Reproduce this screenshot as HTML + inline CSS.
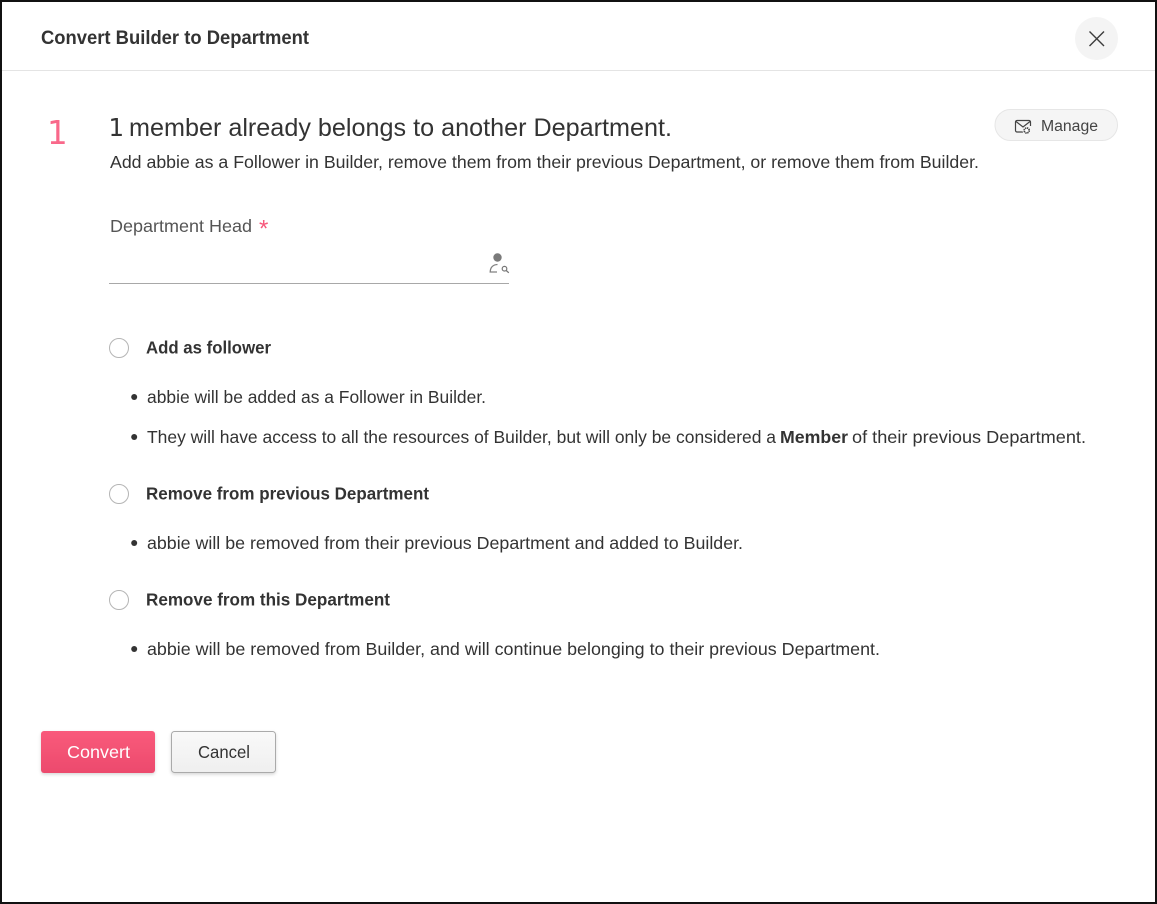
<!DOCTYPE html>
<html lang="en">
<head>
<meta charset="utf-8">
<title>Convert Builder to Department</title>
<style>
html,body{margin:0;padding:0;background:#fff;}
body{width:1157px;height:904px;overflow:hidden;position:relative;}
svg{position:absolute;left:0;top:0;display:block;}
text{font-family:"Liberation Sans",sans-serif;fill:#333;white-space:pre;}
.b{font-weight:bold;}
.t{font-size:17.5px;}
</style>
</head>
<body>
<svg width="1157" height="904" viewBox="0 0 1157 904" xmlns="http://www.w3.org/2000/svg">
<defs>
<linearGradient id="g1" x1="0" y1="0" x2="0" y2="1"><stop offset="0" stop-color="#f95a7b"/><stop offset="1" stop-color="#ec4a6d"/></linearGradient>
<linearGradient id="g2" x1="0" y1="0" x2="0" y2="1"><stop offset="0" stop-color="#f9f9f9"/><stop offset="1" stop-color="#efefef"/></linearGradient>
<filter id="s" x="-10%" y="-10%" width="120%" height="130%"><feDropShadow dx="0" dy="1.5" stdDeviation="1.5" flood-color="#000" flood-opacity=".16"/></filter>
</defs>
<rect x="1" y="1" width="1155" height="902" fill="#fff" stroke="#111" stroke-width="2"/>
<rect x="2" y="70" width="1153" height="1" fill="#e4e4e4"/>

<text class="b" x="41" y="44" font-size="19.5" textLength="268" lengthAdjust="spacingAndGlyphs">Convert Builder to Department</text>
<circle cx="1096.5" cy="38.5" r="21.5" fill="#f4f4f4"/>
<path d="M1089.5 31.5L1104 46M1104 31.5L1089.5 46" stroke="#3c3c3c" stroke-width="1.4" fill="none"/>

<text x="47" y="144" style="font-family:'DejaVu Sans',sans-serif;fill:#f9688a" font-size="32.5">1</text>
<text x="108.5" y="136" style="font-family:'DejaVu Sans',sans-serif" font-size="24.5">1</text>
<text x="129" y="136" font-size="25" textLength="543" lengthAdjust="spacingAndGlyphs">member already belongs to another Department.</text>
<text class="t" x="110" y="168" textLength="869" lengthAdjust="spacingAndGlyphs">Add abbie as a Follower in Builder, remove them from their previous Department, or remove them from Builder.</text>

<rect x="995" y="109.5" width="122.5" height="31" rx="15.5" fill="#f5f5f5" stroke="#e6e6e6"/>
<g fill="none" stroke="#444" stroke-width="1.2">
<path d="M1023 132H1017a1.5 1.5 0 0 1-1.500-1.500V122a1.500 1.500 0 0 1 1.500-1.500H1029a1.500 1.500 0 0 1 1.500 1.500V126"/>
<path d="M1016 121.500L1023 127L1030 121.500"/>
</g>
<circle cx="1026.7" cy="130.500" r="4.200" fill="#f5f5f5"/>
<circle cx="1026.7" cy="130.500" r="2.500" fill="#fff" stroke="#444" stroke-width="1.700" stroke-dasharray="1.300 .65"/>
<text x="1041" y="131" font-size="15.500" style="fill:#444" textLength="57" lengthAdjust="spacingAndGlyphs">Manage</text>

<text class="t" x="110" y="232" style="fill:#555" textLength="142" lengthAdjust="spacingAndGlyphs">Department Head</text>
<text x="259" y="236.500" font-size="24" style="fill:#f7587c">*</text>
<circle cx="497.500" cy="257.500" r="4.200" fill="#7a7a7a"/>
<path d="M497.500 264.500C493 264.700 490.300 267.500 490.200 272H497" fill="none" stroke="#808080" stroke-width="1.300"/>
<circle cx="504.500" cy="268.700" r="2.300" fill="none" stroke="#777" stroke-width="1.200"/>
<path d="M506.200 270.500L508.800 272.800" stroke="#777" stroke-width="1.300"/>
<rect x="109" y="283" width="400" height="1" fill="#a8a8a8"/>

<circle cx="119" cy="348" r="9.500" fill="#fff" stroke="#b5b5b5" stroke-width="1"/>
<text class="b t" x="146" y="353.500" textLength="125" lengthAdjust="spacingAndGlyphs">Add as follower</text>
<circle cx="134.200" cy="397" r="3" fill="#333"/>
<text class="t" x="147" y="403" textLength="339" lengthAdjust="spacingAndGlyphs">abbie will be added as a Follower in Builder.</text>
<circle cx="134.200" cy="437" r="3" fill="#333"/>
<text class="t" x="147" y="443" textLength="629" lengthAdjust="spacingAndGlyphs">They will have access to all the resources of Builder, but will only be considered a</text>
<text class="b t" x="780" y="443" textLength="68" lengthAdjust="spacingAndGlyphs">Member</text>
<text class="t" x="852" y="443" textLength="234" lengthAdjust="spacingAndGlyphs">of their previous Department.</text>

<circle cx="119" cy="494" r="9.500" fill="#fff" stroke="#b5b5b5" stroke-width="1"/>
<text class="b t" x="146" y="499.500" textLength="283" lengthAdjust="spacingAndGlyphs">Remove from previous Department</text>
<circle cx="134.200" cy="543" r="3" fill="#333"/>
<text class="t" x="147" y="549" textLength="596" lengthAdjust="spacingAndGlyphs">abbie will be removed from their previous Department and added to Builder.</text>

<circle cx="119" cy="600" r="9.500" fill="#fff" stroke="#b5b5b5" stroke-width="1"/>
<text class="b t" x="146" y="605.500" textLength="244" lengthAdjust="spacingAndGlyphs">Remove from this Department</text>
<circle cx="134.200" cy="649" r="3" fill="#333"/>
<text class="t" x="147" y="655" textLength="733" lengthAdjust="spacingAndGlyphs">abbie will be removed from Builder, and will continue belonging to their previous Department.</text>

<rect x="41" y="731" width="114" height="42" rx="3" fill="url(#g1)" filter="url(#s)"/>
<text class="t" x="67" y="758" style="fill:#fff" textLength="63" lengthAdjust="spacingAndGlyphs">Convert</text>
<rect x="171.500" y="731.500" width="104" height="41" rx="3" fill="url(#g2)" stroke="#aaa" filter="url(#s)"/>
<text class="t" x="198" y="758" style="fill:#333" textLength="52" lengthAdjust="spacingAndGlyphs">Cancel</text>
</svg>
</body>
</html>
